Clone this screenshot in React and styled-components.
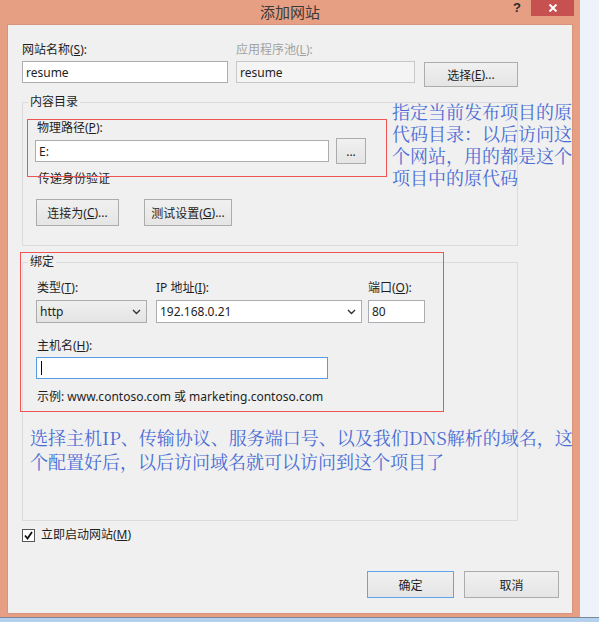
import React from "react";
import styled, { createGlobalStyle } from "styled-components";

const GlobalStyle = createGlobalStyle`
  html, body { margin: 0; padding: 0; }
  body {
    font-family: "Noto Sans", "Noto Sans CJK SC", sans-serif;
    font-size: 12px;
    color: #1e1e1e;
  }
  * { box-sizing: border-box; }
`;

const Page = styled.div`
  position: relative;
  width: 599px;
  height: 622px;
  background: #eef2fa;
  display: flex;
  flex-direction: column;
  overflow: hidden;
`;

const Desk = styled.div`
  display: flex;
  height: 617px;
`;

const Window = styled.div`
  width: 580px;
  background: #e69f82;
  display: flex;
  flex-direction: column;
`;

const TitleBar = styled.div`
  height: 24px;
  display: grid;
  grid-template-columns: 1fr auto 1fr;
  align-items: start;
`;

const Title = styled.div`
  grid-column: 2;
  font-family: "Noto Sans CJK SC", sans-serif;
  font-size: 15px;
  line-height: 24px;
  color: #3a3a3a;
`;

const Controls = styled.div`
  display: flex;
  justify-content: flex-end;
  align-items: flex-start;
  gap: 10px;
  padding-right: 6px;
`;

const Help = styled.span`
  font: bold 13px/13px "Liberation Sans", sans-serif;
  color: #2b2b2b;
  margin-top: 1px;
`;

const CloseButton = styled.div`
  width: 43px;
  height: 16px;
  background: #c75050;
  display: flex;
  align-items: center;
  justify-content: center;
`;

const Panel = styled.div`
  margin: 0 7px;
  height: 590px;
  border: 1px solid #d8957b;
  background: #f0f0f0;
  display: flex;
  flex-direction: column;
`;

const TopGrid = styled.div`
  margin: 17px 0 0 14px;
  display: grid;
  grid-template-columns: 206px 179px 95px;
  column-gap: 8px;
  row-gap: 3px;
  align-items: start;
`;

const Label = styled.div`
  font-size: 12px;
  line-height: 16px;
  height: 16px;
  white-space: nowrap;
  color: ${(p) => (p.$disabled ? "#a2a2a2" : "#1e1e1e")};
  padding-left: ${(p) => p.$indent || 0}px;
`;

const Key = styled.span`
  text-decoration: underline;
  text-underline-offset: 1px;
`;

const TextBox = styled.div`
  width: ${(p) => p.$w}px;
  height: ${(p) => p.$h || 22}px;
  border: 1px solid ${(p) => (p.$focus ? "#569de5" : p.$disabled ? "#c8c8c8" : "#abadb3")};
  background: ${(p) => (p.$disabled ? "#f4f4f4" : "#ffffff")};
  display: flex;
  align-items: center;
  padding-left: 3px;
  font-size: 12px;
  color: #1e1e1e;
  white-space: nowrap;
`;

const Caret = styled.span`
  display: block;
  width: 1px;
  height: 14px;
  background: #000;
  margin-left: 1px;
`;

const Button = styled.div`
  width: ${(p) => p.$w}px;
  height: ${(p) => p.$h || 26}px;
  margin-top: ${(p) => p.$mt || 0}px;
  margin-left: ${(p) => p.$ml || 0}px;
  border: 1px solid ${(p) => (p.$default ? "#5ea6ec" : "#acacac")};
  background: linear-gradient(#f0f0f0, #e5e5e5);
  display: flex;
  align-items: center;
  justify-content: center;
  font-size: 12px;
  color: #1e1e1e;
  white-space: nowrap;
`;

const Groups = styled.div`
  padding-left: 14px;
  display: flex;
  flex-direction: column;
`;

const Group = styled.fieldset`
  margin: ${(p) => p.$mt}px 0 0 0;
  padding: 0;
  width: 496px;
  min-width: 0;
  border: 1px solid #dcdcdc;
`;

const Legend = styled.legend`
  margin-left: 5px;
  padding: 0 2px;
  font-size: 12px;
  line-height: 16px;
  color: #1e1e1e;
`;

const GroupBody = styled.div`
  display: flex;
  flex-direction: column;
  align-items: flex-start;
  padding: ${(p) => p.$pad};
`;

const Row = styled.div`
  display: flex;
  align-items: center;
  gap: ${(p) => p.$gap || 0}px;
  margin-top: ${(p) => p.$mt || 0}px;
`;

const Spaced = styled.div`
  margin-top: ${(p) => p.$mt || 0}px;
`;

const BindGrid = styled.div`
  display: grid;
  grid-template-columns: 120px 212px 57px;
  row-gap: 4px;
`;

const Select = styled.div`
  width: ${(p) => p.$w}px;
  height: 23px;
  border: 1px solid ${(p) => (p.$editable ? "#abadb3" : "#acacac")};
  background: ${(p) => (p.$editable ? "#ffffff" : "linear-gradient(#efefef, #e4e4e4)")};
  display: flex;
  align-items: center;
  justify-content: space-between;
  padding: 0 5px 0 3px;
  font-size: 12px;
  color: #1e1e1e;
`;

const CheckRow = styled.div`
  margin: 6px 0 0 14px;
  display: flex;
  align-items: center;
  gap: 6px;
  height: 16px;
`;

const CheckBox = styled.div`
  width: 13px;
  height: 13px;
  border: 1px solid #555;
  background: #fff;
  display: flex;
  align-items: center;
  justify-content: center;
`;

const Footer = styled.div`
  margin-top: 28px;
  padding-right: 13px;
  display: flex;
  justify-content: flex-end;
  gap: 10px;
`;

const RightFill = styled.div`
  flex: 1;
  background: #eef2fa;
`;

const BottomLine = styled.div`
  height: 1px;
  background: #7f8896;
`;

const BottomStrip = styled.div`
  flex: 1;
  background: #b4d0ef;
`;

const RedFrame = styled.div`
  position: absolute;
  left: ${(p) => p.$x}px;
  top: ${(p) => p.$y}px;
  width: ${(p) => p.$w}px;
  height: ${(p) => p.$h}px;
  border: 1px solid #f05555;
  pointer-events: none;
`;

const Note = styled.div`
  position: absolute;
  left: ${(p) => p.$x}px;
  top: ${(p) => p.$y}px;
  font-family: "Noto Serif CJK SC", "Noto Sans CJK SC", serif;
  font-size: 18px;
  line-height: ${(p) => p.$lh}px;
  color: #4a6cd4;
  white-space: nowrap;
`;

const Chevron = () => (
  <svg width="9" height="6" viewBox="0 0 9 6">
    <polyline points="1,1 4.5,4.5 8,1" fill="none" stroke="#333" strokeWidth="1.4" />
  </svg>
);

export default function App() {
  return (
    <>
      <GlobalStyle />
      <Page>
        <Desk>
          <Window>
            <TitleBar>
              <Title>添加网站</Title>
              <Controls>
                <Help>?</Help>
                <CloseButton>
                  <svg width="10" height="8" viewBox="0 0 10 8">
                    <path d="M1.5 0.5 L8.5 7.5 M8.5 0.5 L1.5 7.5" stroke="#fff" strokeWidth="2" />
                  </svg>
                </CloseButton>
              </Controls>
            </TitleBar>
            <Panel>
              <TopGrid>
                <Label>
                  网站名称(<Key>S</Key>):
                </Label>
                <Label $disabled>
                  应用程序池(<Key>L</Key>):
                </Label>
                <div />
                <TextBox $w={206}>resume</TextBox>
                <TextBox $w={179} $disabled>
                  resume
                </TextBox>
                <Button $w={94} $h={25} $mt={1} $ml={1}>
                  选择(<Key>E</Key>)...
                </Button>
              </TopGrid>

              <Groups>
                <Group $mt={7}>
                  <Legend>内容目录</Legend>
                  <GroupBody $pad="10px 0 19px 12px">
                    <Label $indent={2}>
                      物理路径(<Key>P</Key>):
                    </Label>
                    <Row $mt={2} $gap={7}>
                      <TextBox $w={294}>E:</TextBox>
                      <Button $w={30} $h={26}>
                        ...
                      </Button>
                    </Row>
                    <Spaced $mt={7}>
                      <Label $indent={3}>传递身份验证</Label>
                    </Spaced>
                    <Row $mt={12} $gap={25}>
                      <Button $w={83} $h={27} $ml={1}>
                        连接为(<Key>C</Key>)...
                      </Button>
                      <Button $w={88} $h={27}>
                        测试设置(<Key>G</Key>)...
                      </Button>
                    </Row>
                  </GroupBody>
                </Group>

                <Group $mt={8}>
                  <Legend>绑定</Legend>
                  <GroupBody $pad="10px 0 115px 13px">
                    <BindGrid>
                      <Label $indent={1}>
                        类型(<Key>T</Key>):
                      </Label>
                      <Label>
                        IP 地址(<Key>I</Key>):
                      </Label>
                      <Label>
                        端口(<Key>O</Key>):
                      </Label>
                      <Select $w={111}>
                        <span>http</span>
                        <Chevron />
                      </Select>
                      <Select $w={206} $editable>
                        <span>192.168.0.21</span>
                        <Chevron />
                      </Select>
                      <TextBox $w={57} $h={23}>
                        80
                      </TextBox>
                    </BindGrid>
                    <Spaced $mt={15}>
                      <Label $indent={1}>
                        主机名(<Key>H</Key>):
                      </Label>
                    </Spaced>
                    <Spaced $mt={3}>
                      <TextBox $w={292} $focus>
                        <Caret />
                      </TextBox>
                    </Spaced>
                    <Spaced $mt={10}>
                      <Label $indent={1}>示例: www.contoso.com 或 marketing.contoso.com</Label>
                    </Spaced>
                  </GroupBody>
                </Group>
              </Groups>

              <CheckRow>
                <CheckBox>
                  <svg width="9" height="9" viewBox="0 0 9 9">
                    <polyline points="1,4.5 3.5,7.5 8,1" fill="none" stroke="#111" strokeWidth="1.8" />
                  </svg>
                </CheckBox>
                <Label>
                  立即启动网站(<Key>M</Key>)
                </Label>
              </CheckRow>

              <Footer>
                <Button $w={87} $h={27} $default>
                  确定
                </Button>
                <Button $w={95} $h={27}>
                  取消
                </Button>
              </Footer>
            </Panel>
          </Window>
          <RightFill />
        </Desk>
        <BottomLine />
        <BottomStrip />

        <RedFrame $x={27} $y={119} $w={360} $h={58} />
        <RedFrame $x={20} $y={252} $w={424} $h={160} />

        <Note $x={392} $y={100} $lh={22}>
          指定当前发布项目的原
          <br />
          代码目录：以后访问这
          <br />
          个网站，用的都是这个
          <br />
          项目中的原代码
        </Note>
        <Note $x={30} $y={425} $lh={24}>
          选择主机IP、传输协议、服务端口号、以及我们DNS解析的域名，这
          <br />
          个配置好后，以后访问域名就可以访问到这个项目了
        </Note>
      </Page>
    </>
  );
}
